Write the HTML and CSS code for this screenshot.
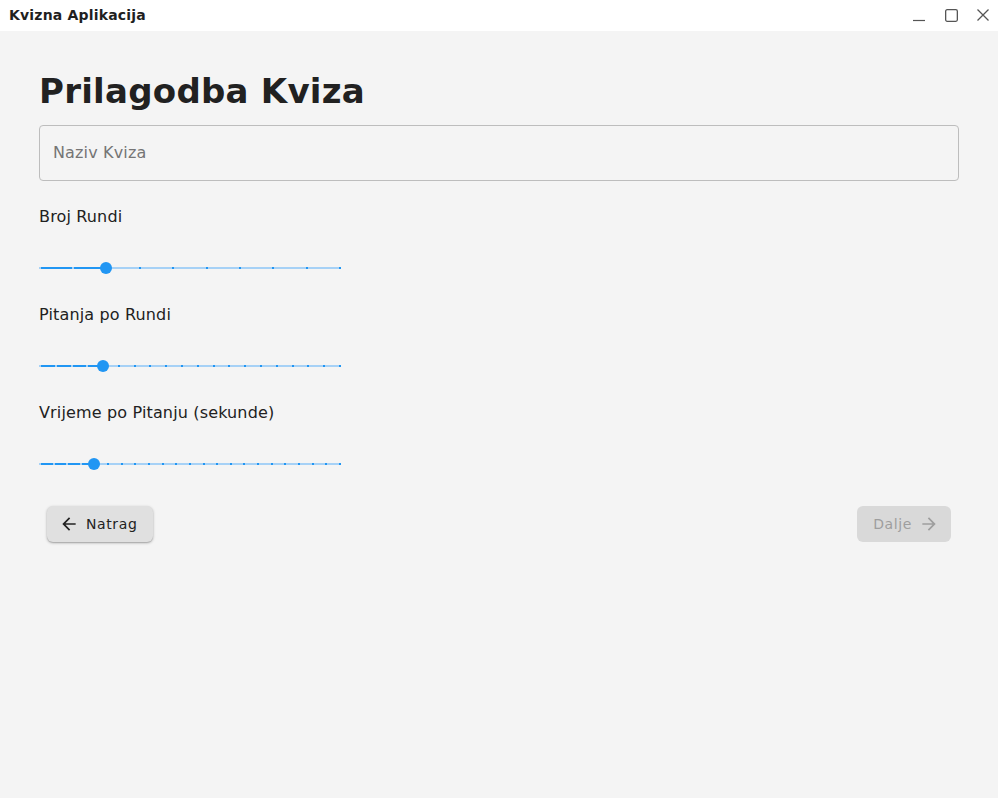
FILE: index.html
```html
<!DOCTYPE html>
<html lang="hr">
<head>
<meta charset="utf-8">
<title>Kvizna Aplikacija</title>
<link rel="stylesheet" href="styles.css">
</head>
<body>
<div class="window">
  <header class="titlebar">
    <span class="app-title">Kvizna Aplikacija</span>
    <div class="controls">
      <svg class="ctl" width="14" height="14" viewBox="0 0 14 14"><path d="M1 12.5h12" stroke="#555" stroke-width="1.2" fill="none"/></svg>
      <svg class="ctl" width="14" height="14" viewBox="0 0 14 14"><rect x="1.65" y="1.65" width="11.7" height="11.7" rx="1.5" stroke="#555" stroke-width="1.3" fill="none"/></svg>
      <svg class="ctl" width="14" height="14" viewBox="0 0 14 14"><path d="M1.5 1.5l11 11M12.5 1.5l-11 11" stroke="#555" stroke-width="1.3" fill="none"/></svg>
    </div>
  </header>

  <main class="content">
    <h1 class="heading">Prilagodba Kviza</h1>
    <div class="field">
      <input class="text-input" type="text" placeholder="Naziv Kviza">
    </div>

    <section class="setting">
      <div class="label">Broj Rundi</div>
      <div class="slider">
        <div class="track" style="--v: 22.2222%">
          <span class="tick on"></span><span class="tick on"></span><span class="tick on"></span><span class="tick"></span><span class="tick"></span><span class="tick"></span><span class="tick"></span><span class="tick"></span><span class="tick"></span><span class="tick"></span>
          <span class="thumb" style="left: 22.2222%"></span>
        </div>
      </div>
    </section>

    <section class="setting">
      <div class="label">Pitanja po Rundi</div>
      <div class="slider">
        <div class="track" style="--v: 21.0526%">
          <span class="tick on"></span><span class="tick on"></span><span class="tick on"></span><span class="tick on"></span><span class="tick on"></span><span class="tick"></span><span class="tick"></span><span class="tick"></span><span class="tick"></span><span class="tick"></span><span class="tick"></span><span class="tick"></span><span class="tick"></span><span class="tick"></span><span class="tick"></span><span class="tick"></span><span class="tick"></span><span class="tick"></span><span class="tick"></span><span class="tick"></span>
          <span class="thumb" style="left: 21.0526%"></span>
        </div>
      </div>
    </section>

    <section class="setting">
      <div class="label">Vrijeme po Pitanju (sekunde)</div>
      <div class="slider">
        <div class="track" style="--v: 18.1818%">
          <span class="tick on"></span><span class="tick on"></span><span class="tick on"></span><span class="tick on"></span><span class="tick on"></span><span class="tick"></span><span class="tick"></span><span class="tick"></span><span class="tick"></span><span class="tick"></span><span class="tick"></span><span class="tick"></span><span class="tick"></span><span class="tick"></span><span class="tick"></span><span class="tick"></span><span class="tick"></span><span class="tick"></span><span class="tick"></span><span class="tick"></span><span class="tick"></span><span class="tick"></span><span class="tick"></span>
          <span class="thumb" style="left: 18.1818%"></span>
        </div>
      </div>
    </section>

    <div class="actions">
      <button class="btn btn-back" type="button">
        <svg width="20" height="20" viewBox="0 0 24 24"><path d="M20 11H7.83l5.59-5.59L12 4l-8 8 8 8 1.41-1.41L7.83 13H20v-2z" fill="#222"/></svg>
        <span>Natrag</span>
      </button>
      <button class="btn btn-next" type="button" disabled>
        <span>Dalje</span>
        <svg width="20" height="20" viewBox="0 0 24 24"><path d="M12 4l-1.41 1.41L16.17 11H4v2h12.17l-5.58 5.59L12 20l8-8z" fill="#9e9e9e"/></svg>
      </button>
    </div>
  </main>
</div>
</body>
</html>
```

FILE: styles.css
```css
* { box-sizing: border-box; }

html, body {
  margin: 0;
  padding: 0;
  height: 100%;
}

body {
  font-family: "DejaVu Sans", sans-serif;
  background: #f4f4f4;
  color: #212121;
}

.window {
  display: flex;
  flex-direction: column;
  min-height: 100%;
}

.titlebar {
  height: 31px;
  background: #ffffff;
  display: flex;
  align-items: center;
  justify-content: space-between;
  padding: 0 0 1px 9px;
}

.app-title {
  font-weight: bold;
  font-size: 14px;
  letter-spacing: 0.18px;
  color: #1f1f1f;
}

.controls {
  display: flex;
  align-items: center;
  gap: 18px;
  padding-right: 8px;
}

.ctl { display: block; }

.content {
  padding: 0 39px;
  display: flex;
  flex-direction: column;
}

.heading {
  margin: 36px 0 0 0;
  font-size: 34px;
  line-height: 48px;
  font-weight: bold;
  color: #212121;
  letter-spacing: 0.25px;
}

.field {
  margin-top: 10px;
}

.text-input {
  display: block;
  width: 100%;
  height: 56px;
  border: 1px solid #bdbdbd;
  border-radius: 4px;
  background: transparent;
  padding: 0 13px 2px;
  font-family: "DejaVu Sans", sans-serif;
  font-size: 16px;
  letter-spacing: 0.15px;
  color: #212121;
  outline: none;
}

.text-input::placeholder {
  color: #757575;
}

.setting {
  display: flex;
  flex-direction: column;
  margin-top: 24px;
}

.setting + .setting {
  margin-top: 11px;
}

.label {
  font-size: 16px;
  line-height: 24px;
  letter-spacing: 0.15px;
  color: #212121;
}

.slider {
  height: 48px;
  margin-top: 15px;
  display: flex;
  align-items: center;
}

.track {
  position: relative;
  width: 302px;
  height: 2px;
  display: flex;
  justify-content: space-between;
  background: linear-gradient(to right, #2196f3 var(--v), #a6d1f6 var(--v));
}

.tick {
  width: 2px;
  height: 2px;
  background: #2196f3;
}

.tick.on {
  background: #a6d1f6;
}

.thumb {
  position: absolute;
  top: 50%;
  width: 12px;
  height: 12px;
  margin: -6px 0 0 -6px;
  border-radius: 50%;
  background: #2196f3;
}

.actions {
  display: flex;
  justify-content: space-between;
  padding: 0 8px;
  margin-top: 18px;
}

.btn {
  height: 36px;
  border: none;
  border-radius: 6px;
  display: flex;
  align-items: center;
  gap: 7px;
  font-family: "DejaVu Sans", sans-serif;
  font-size: 14px;
  letter-spacing: 0.6px;
  cursor: pointer;
}

.btn svg { display: block; }

.btn-back {
  background: #e0e0e0;
  color: #222;
  padding: 0 16px 0 12px;
  box-shadow: 0 1px 3px rgba(0,0,0,0.28), 0 1px 1px rgba(0,0,0,0.12);
}

.btn-next {
  background: #d9d9d9;
  color: #9e9e9e;
  padding: 0 12px 0 16px;
}
```
